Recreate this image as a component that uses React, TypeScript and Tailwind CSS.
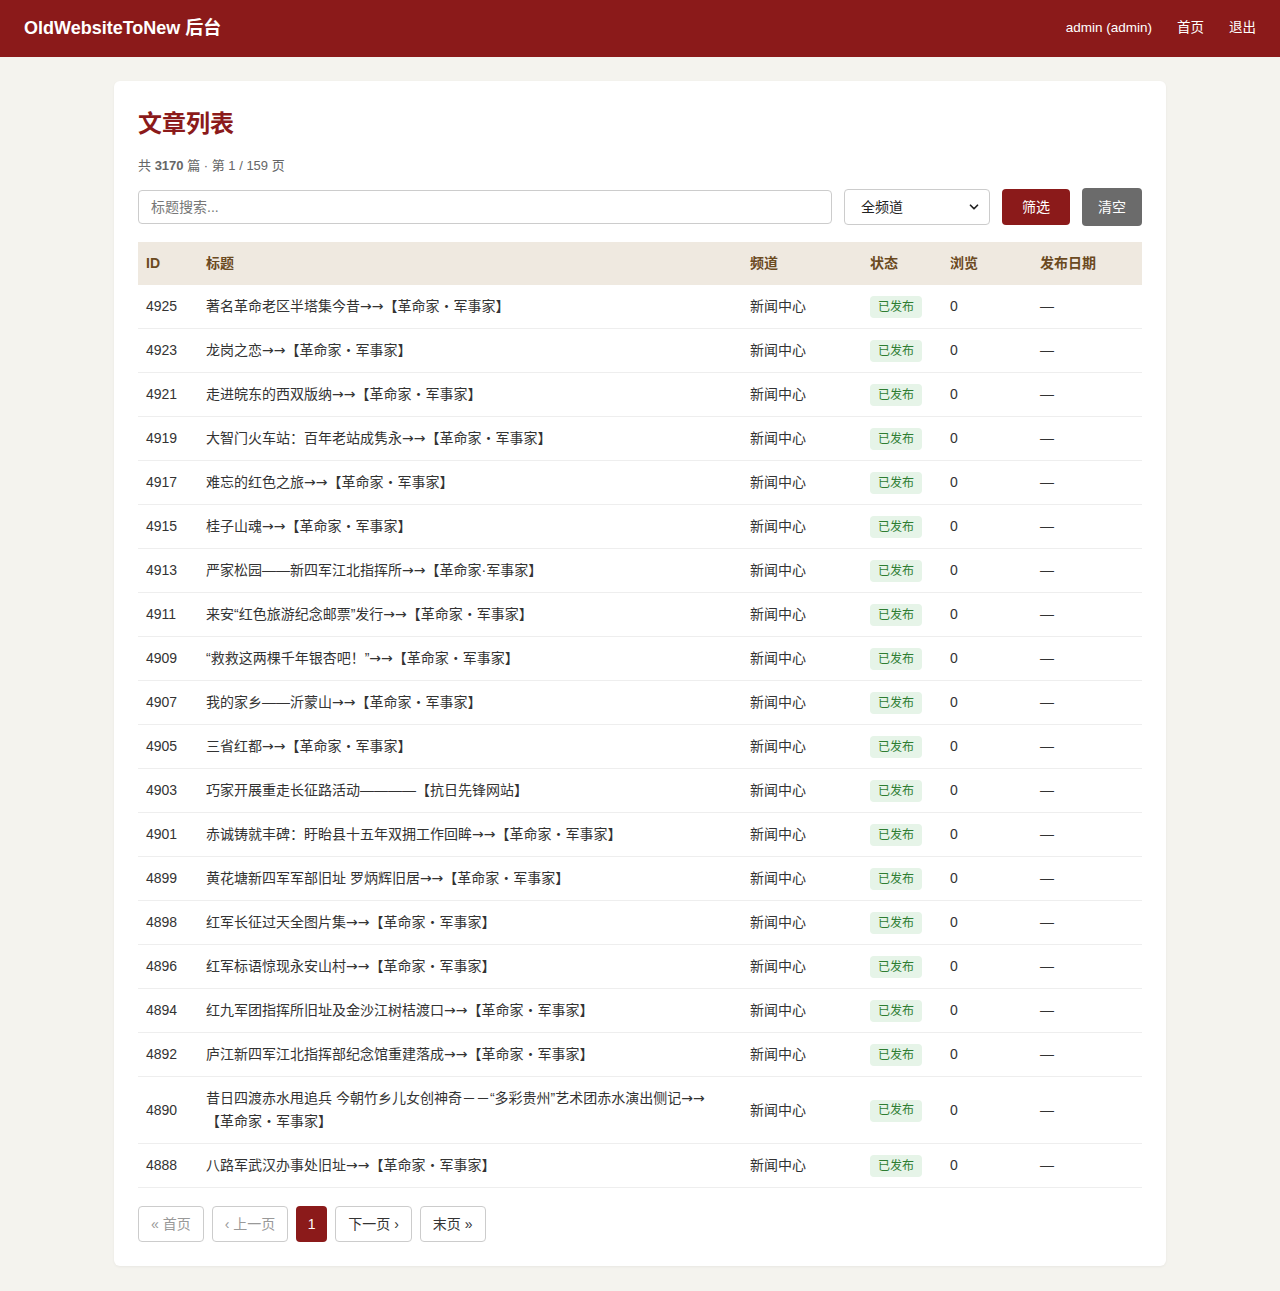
import { ChevronDown } from "lucide-react";

const rows: [string, string][] = [
  ["4925", "著名革命老区半塔集今昔→→【革命家・军事家】"],
  ["4923", "龙岗之恋→→【革命家・军事家】"],
  ["4921", "走进皖东的西双版纳→→【革命家・军事家】"],
  ["4919", "大智门火车站：百年老站成隽永→→【革命家・军事家】"],
  ["4917", "难忘的红色之旅→→【革命家・军事家】"],
  ["4915", "桂子山魂→→【革命家・军事家】"],
  ["4913", "严家松园——新四军江北指挥所→→【革命家·军事家】"],
  ["4911", "来安“红色旅游纪念邮票”发行→→【革命家・军事家】"],
  ["4909", "“救救这两棵千年银杏吧！”→→【革命家・军事家】"],
  ["4907", "我的家乡——沂蒙山→→【革命家・军事家】"],
  ["4905", "三省红都→→【革命家・军事家】"],
  ["4903", "巧家开展重走长征路活动————【抗日先锋网站】"],
  ["4901", "赤诚铸就丰碑：盱眙县十五年双拥工作回眸→→【革命家・军事家】"],
  ["4899", "黄花塘新四军军部旧址 罗炳辉旧居→→【革命家・军事家】"],
  ["4898", "红军长征过天全图片集→→【革命家・军事家】"],
  ["4896", "红军标语惊现永安山村→→【革命家・军事家】"],
  ["4894", "红九军团指挥所旧址及金沙江树桔渡口→→【革命家・军事家】"],
  ["4892", "庐江新四军江北指挥部纪念馆重建落成→→【革命家・军事家】"],
  ["4890", "昔日四渡赤水甩追兵 今朝竹乡儿女创神奇－－“多彩贵州”艺术团赤水演出侧记→→【革命家・军事家】"],
  ["4888", "八路军武汉办事处旧址→→【革命家・军事家】"],
];

const font = { fontFamily: '"Liberation Sans", "Noto Sans CJK SC", sans-serif' };

// arrows look better in DejaVu
const Title = ({ text }: { text: string }) => {
  const parts = text.split(/(→+)/);
  return (
    <>
      {parts.map((p, i) =>
        p.startsWith("→") ? (
          <span key={i} className="font-['DejaVu_Sans'] text-[14px]">
            {p}
          </span>
        ) : (
          <span key={i}>{p}</span>
        )
      )}
    </>
  );
};

const App = () => {
  return (
    <div className="min-h-[1291px] bg-[#f4f3ee] text-[#333]" style={font}>
      <header className="h-[57px] bg-[#8b1a1a] text-white flex items-center justify-between px-6">
        <div className="text-[18px] font-bold">OldWebsiteToNew 后台</div>
        <nav className="flex items-center gap-[25px] text-[13.5px]">
          <span>admin (admin)</span>
          <a>首页</a>
          <a>退出</a>
        </nav>
      </header>

      <main className="pt-6 pb-6">
        <div className="mx-auto w-[1052px] bg-white rounded-md px-6 pt-6 pb-6 shadow-[0_1px_3px_rgba(0,0,0,0.05)]">
          <h1 className="text-[24px] font-bold text-[#8b1a1a] leading-[38px]">文章列表</h1>
          <p className="mt-[13px] text-[13px] text-[#666] leading-5">
            共 <b className="font-semibold">3170</b> 篇 · 第 1 / 159 页
          </p>

          <div className="mt-3 flex items-center gap-3">
            <input
              className="flex-1 h-[34px] border border-[#ccc] rounded px-3 text-[14px] placeholder:text-[#777] outline-none"
              placeholder="标题搜索..."
            />
            <div className="relative w-[146px] h-[36px] border border-[#ccc] rounded flex items-center px-4 text-[14px] text-[#222]">
              全频道
              <ChevronDown size={14} strokeWidth={3} className="absolute right-2 text-[#222]" />
            </div>
            <button className="w-[68px] h-[36px] rounded bg-[#8b1a1a] text-white text-[14px]">筛选</button>
            <button className="w-[60px] h-[38px] rounded bg-[#6b6b6b] text-white text-[14px]">清空</button>
          </div>

          <table className="mt-4 w-full table-fixed border-collapse text-[14px]">
            <colgroup>
              <col className="w-[60px]" />
              <col className="w-[544px]" />
              <col className="w-[120px]" />
              <col className="w-[80px]" />
              <col className="w-[90px]" />
              <col className="w-[110px]" />
            </colgroup>
            <thead>
              <tr className="bg-[#efe9e0] text-[#6b4a1f] text-left">
                <th className="h-[43px] px-2 font-bold text-[14px]">ID</th>
                <th className="px-2 font-bold text-[14px]">标题</th>
                <th className="px-2 font-bold text-[14px]">频道</th>
                <th className="px-2 font-bold text-[14px]">状态</th>
                <th className="px-2 font-bold text-[14px]">浏览</th>
                <th className="px-2 font-bold text-[14px]">发布日期</th>
              </tr>
            </thead>
            <tbody>
              {rows.map(([id, title]) => (
                <tr key={id} className="border-b border-[#eee]">
                  <td className="h-[43px] px-2 py-0 leading-[23px]">{id}</td>
                  <td className="pl-2 pr-7 py-[10px] leading-[23px]">
                    <Title text={title} />
                  </td>
                  <td className="px-2 py-0 leading-[23px]">新闻中心</td>
                  <td className="px-2 py-0 leading-[23px]">
                    <span className="inline-flex items-center h-[22px] px-2 rounded bg-[#e6f4e8] text-[#2e7d32] text-[12px] align-middle">
                      已发布
                    </span>
                  </td>
                  <td className="px-2 py-0 leading-[23px]">0</td>
                  <td className="px-2 py-0 leading-[23px]">—</td>
                </tr>
              ))}
            </tbody>
          </table>

          <div className="mt-[18px] flex items-center gap-2 text-[14px]">
            <span className="h-[36px] px-3 flex items-center border border-[#ccc] rounded text-[#999]">« 首页</span>
            <span className="h-[36px] px-3 flex items-center border border-[#ccc] rounded text-[#999]">‹ 上一页</span>
            <span className="h-[36px] w-[31px] flex items-center justify-center rounded bg-[#8b1a1a] text-white">1</span>
            <span className="h-[36px] px-3 flex items-center border border-[#ccc] rounded text-[#333]">下一页 ›</span>
            <span className="h-[36px] px-3 flex items-center border border-[#ccc] rounded text-[#333]">末页 »</span>
          </div>
        </div>
      </main>
    </div>
  );
};

export default App;
